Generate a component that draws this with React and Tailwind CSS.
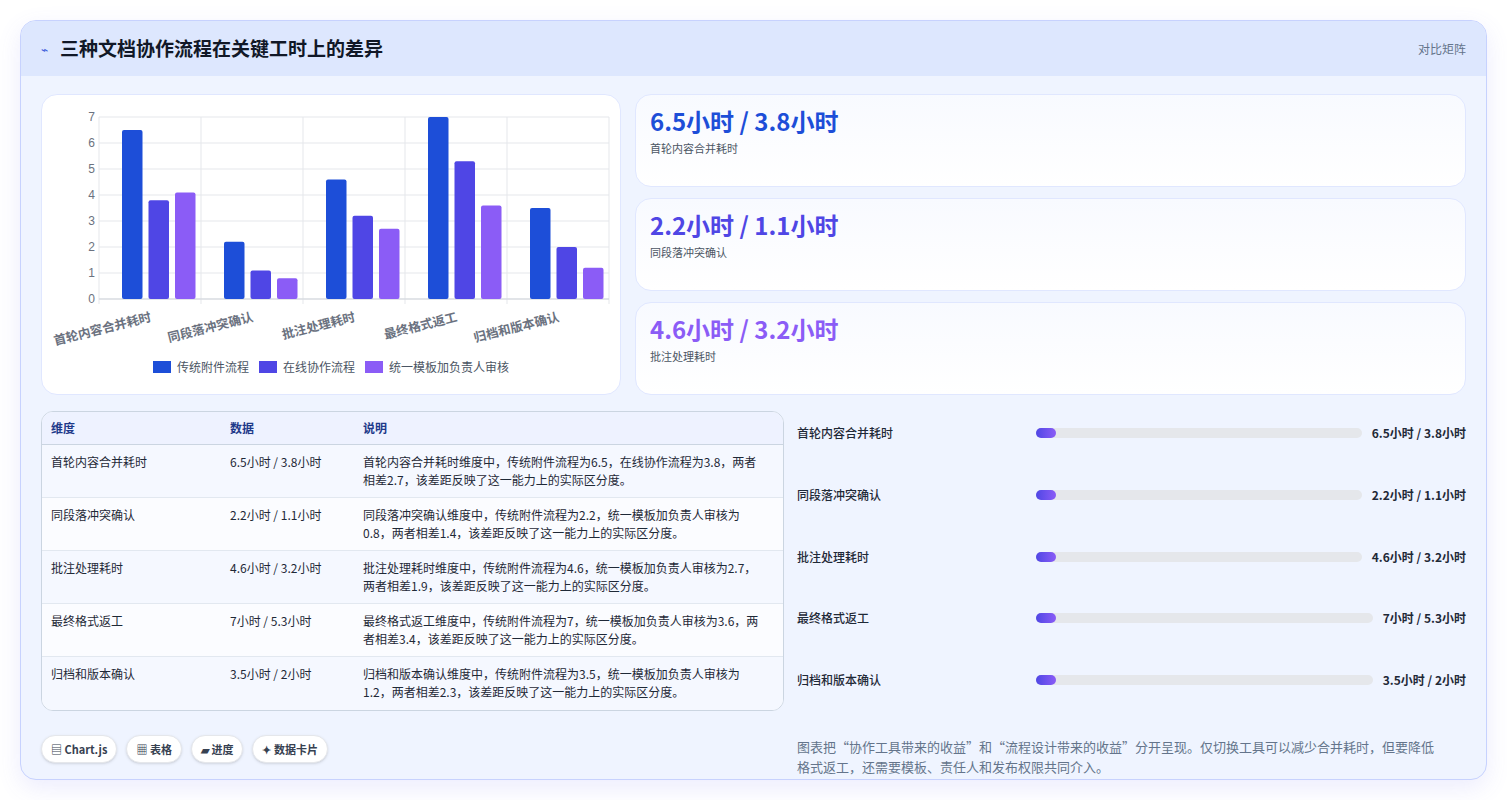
import React from "react";

const cats = ["首轮内容合并耗时", "同段落冲突确认", "批注处理耗时", "最终格式返工", "归档和版本确认"];
const data = [
  [6.5, 3.8, 4.1],
  [2.2, 1.1, 0.8],
  [4.6, 3.2, 2.7],
  [7, 5.3, 3.6],
  [3.5, 2, 1.2],
];
const colors = ["#1d4ed8", "#4f46e5", "#8b5cf6"];
const rows = [
  ["首轮内容合并耗时", "6.5小时 / 3.8小时", "首轮内容合并耗时维度中，传统附件流程为6.5，在线协作流程为3.8，两者相差2.7，该差距反映了这一能力上的实际区分度。"],
  ["同段落冲突确认", "2.2小时 / 1.1小时", "同段落冲突确认维度中，传统附件流程为2.2，统一模板加负责人审核为0.8，两者相差1.4，该差距反映了这一能力上的实际区分度。"],
  ["批注处理耗时", "4.6小时 / 3.2小时", "批注处理耗时维度中，传统附件流程为4.6，统一模板加负责人审核为2.7，两者相差1.9，该差距反映了这一能力上的实际区分度。"],
  ["最终格式返工", "7小时 / 5.3小时", "最终格式返工维度中，传统附件流程为7，统一模板加负责人审核为3.6，两者相差3.4，该差距反映了这一能力上的实际区分度。"],
  ["归档和版本确认", "3.5小时 / 2小时", "归档和版本确认维度中，传统附件流程为3.5，统一模板加负责人审核为1.2，两者相差2.3，该差距反映了这一能力上的实际区分度。"],
];

function Chart() {
  const L = 57, R = 567, T = 22, B = 204;
  const unit = (B - T) / 7;
  const cw = (R - L) / 5;
  return (
    <svg width="580" height="300" viewBox="0 0 580 300">
      {[0, 1, 2, 3, 4, 5, 6, 7].map((v) => (
        <g key={v}>
          <line x1={L} x2={R} y1={B - v * unit} y2={B - v * unit} stroke="#e5e7eb" />
          <text x={L - 4} y={B - v * unit + 4} textAnchor="end" fontSize="12" fill="#6b7280" fontFamily="Liberation Sans, sans-serif">{v}</text>
        </g>
      ))}
      {[0, 1, 2, 3, 4, 5].map((i) => (
        <line key={i} x1={L + i * cw} x2={L + i * cw} y1={T} y2={B + 5} stroke="#e5e7eb" />
      ))}
      <line x1={L} x2={R} y1={B} y2={B} stroke="#d1d5db" />
      {data.map((d, i) =>
        d.map((v, j) => (
          <rect key={i + "-" + j} x={L + i * cw + 23 + j * 26.5} y={B - v * unit} width="20.5" height={v * unit} rx="2" fill={colors[j]} />
        ))
      )}
      {cats.map((c, i) => (
        <text key={c} x={L + i * cw + cw / 2 + 2} y={B + 22} textAnchor="end" fontSize="12.5" fontWeight="600" fill="#6b7280"
          transform={`rotate(-14 ${L + i * cw + cw / 2 + 2} ${B + 22})`} fontFamily="'Noto Sans CJK SC', sans-serif">{c}</text>
      ))}
    </svg>
  );
}

export default function App() {
  return (
    <div className="min-h-[800px] bg-white p-5" style={{ fontFamily: "'Noto Sans CJK SC', 'Noto Sans', sans-serif" }}>
      <div className="rounded-2xl border border-[#c7d2fe] bg-[#eff4ff] overflow-hidden shadow-[0_8px_24px_rgba(99,102,241,0.12)] h-[760px]">
        <div className="h-[55px] bg-[#dde7fe] flex items-center justify-between px-5">
          <div className="flex items-center gap-3">
            <span className="text-[#3b5bdb] text-xs">⌁</span>
            <span className="text-[19px] font-bold text-[#111827]">三种文档协作流程在关键工时上的差异</span>
          </div>
          <span className="text-[12px] text-[#64748b]">对比矩阵</span>
        </div>
        <div className="px-5 pt-[18px]">
          <div className="flex gap-[14px]">
            <div className="w-[580px] h-[301px] rounded-2xl bg-white border border-[#e0e7ff] relative">
              <Chart />
              <div className="absolute left-0 right-0 top-[263px] flex justify-center gap-[10px] text-[12px] text-[#4b5563]">
                {["传统附件流程", "在线协作流程", "统一模板加负责人审核"].map((l, i) => (
                  <div key={l} className="flex items-center gap-[6px]">
                    <span className="w-[18px] h-[12px]" style={{ background: colors[i] }} />
                    {l}
                  </div>
                ))}
              </div>
            </div>
            <div className="flex-1 flex flex-col gap-[11px]">
              {[["6.5小时 / 3.8小时", "首轮内容合并耗时", "text-[#1d4ed8]"], ["2.2小时 / 1.1小时", "同段落冲突确认", "text-[#4f46e5]"], ["4.6小时 / 3.2小时", "批注处理耗时", "text-[#8b5cf6]"]].map(([v, l, c]) => (
                <div key={l} className="h-[93px] rounded-2xl border border-[#e0e7ff] bg-gradient-to-b from-[#f8faff] to-white px-[14px] pt-[8px]">
                  <div className={"text-[24px] font-bold leading-[36px] " + c}>{v}</div>
                  <div className="text-[11px] text-[#4b5563] mt-[1px]">{l}</div>
                </div>
              ))}
            </div>
          </div>
          <div className="flex gap-[13px] mt-[16px]">
            <div className="w-[743px]">
              <div className="rounded-xl border border-[#cbd5e1] overflow-hidden bg-white">
                <div className="grid grid-cols-[179px_133px_1fr] h-[33px] items-center bg-[#eef2ff] text-[12px] text-[#1e3a8a] font-semibold border-b border-[#cbd5e1] px-[9px]">
                  <div>维度</div><div>数据</div><div>说明</div>
                </div>
                {rows.map((r, i) => (
                  <div key={i} className={"grid grid-cols-[179px_133px_1fr] px-[9px] pt-[8px] h-[53px] text-[12px] text-[#1f2937] leading-[18px] " + (i % 2 === 0 ? "bg-[#f5f8ff]" : "bg-[#fbfcff]") + (i < 4 ? " border-b border-[#e2e8f0]" : "")}>
                    <div>{r[0]}</div><div>{r[1]}</div><div className="pr-2">{r[2]}</div>
                  </div>
                ))}
              </div>
              <div className="flex gap-[9px] mt-[24px]">
                {["▤ Chart.js", "▦ 表格", "▰ 进度", "✦ 数据卡片"].map((t) => (
                  <span key={t} className="h-[28px] px-[9px] rounded-full bg-white border border-[#e5e7eb] text-[11px] font-semibold text-[#374151] flex items-center shadow-sm">{t}</span>
                ))}
              </div>
            </div>
            <div className="flex-1 flex flex-col">
              <div className="flex flex-col pt-[13px]">
                {rows.map((r, i) => (
                  <div key={i} className="h-[61.8px] flex items-start text-[12px] text-[#1f2937]">
                    <div className="w-[239px] font-medium">{r[0]}</div>
                    <div className="flex-1 h-[10px] rounded-full bg-[#e5e7eb] mt-[4px] mr-[10px]">
                      <div className="h-[10px] w-[20px] rounded-full bg-gradient-to-r from-[#4f46e5] to-[#8b5cf6]" />
                    </div>
                    <div className="font-bold text-[12px]">{r[1]}</div>
                  </div>
                ))}
              </div>
              <div className="text-[13px] text-[#64748b] leading-[20px] mt-[4px] pr-[20px]">
                图表把“协作工具带来的收益”和“流程设计带来的收益”分开呈现。仅切换工具可以减少合并耗时，但要降低格式返工，还需要模板、责任人和发布权限共同介入。
              </div>
            </div>
          </div>
        </div>
      </div>
    </div>
  );
}
